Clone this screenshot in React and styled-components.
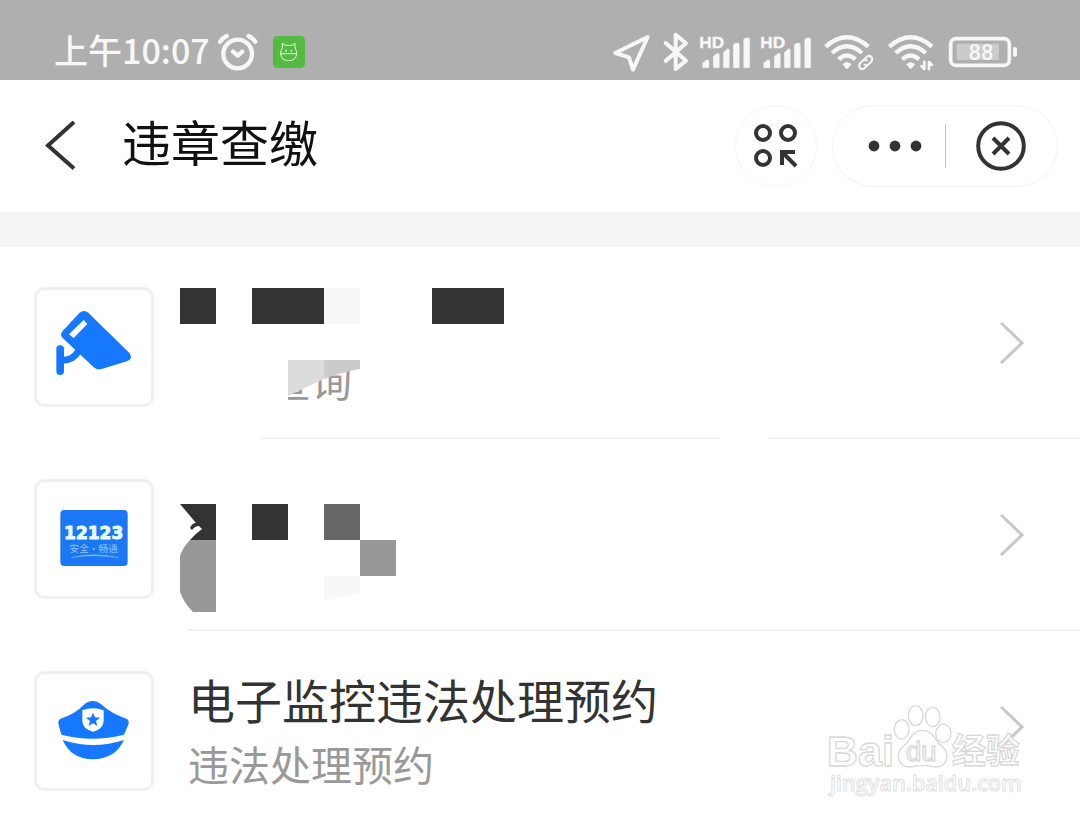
import React from 'react';
import styled, { createGlobalStyle } from 'styled-components';

const services = [
  { id: 'query', subtitle: '查询', indent: true, icon: 'camera', label: '查询', broken: true },
  { id: '12123', icon: 'badge', label: '12123' },
  { id: 'booking', title: '电子监控违法处理预约', subtitle: '违法处理预约', icon: 'cap' },
];

const AlarmIcon = () => (
  <svg width="47" height="60" viewBox="531 0 141 180" fill="none" stroke="#f7f7f7" strokeWidth="13" strokeLinecap="round" strokeLinejoin="round">
    <circle cx="590" cy="102" r="43" />
    <path d="M576 95l14 12 14-12" />
    <path d="M537 65q8-11 20-17M643 65q-8-11-20-17" />
  </svg>
);

const PetIcon = () => (
  <svg width="32" height="60" viewBox="696 0 96 180" fill="none" stroke="#e6ffdc" strokeWidth="3" strokeLinejoin="round">
    <rect x="696" y="48" width="96" height="96" rx="14" fill="#53bb41" stroke="none" />
    <path d="M724 84v-14l9 6h20l9-6v14q6 8 5 17-2 21-24 21t-24-21q-1-9 5-17zM720 101h46" />
    <path d="M735 89v6M751 89v6" strokeWidth="4" />
  </svg>
);

const LocationIcon = () => (
  <svg width="42" height="60" viewBox="33 0 126 180" fill="none" stroke="#f7f7f7" strokeWidth="12" strokeLinejoin="round">
    <path d="M143 51L46 99l41 13 12 37z" />
  </svg>
);

const BluetoothIcon = () => (
  <svg width="30" height="60" viewBox="183 0 90 180" fill="none" stroke="#f7f7f7" strokeWidth="12" strokeLinecap="round" strokeLinejoin="round">
    <path d="M197 69l61 53-31 25V44l31 26-61 53" />
  </svg>
);

const SignalIcon = () => (
  <svg width="53" height="60" viewBox="297 0 159 180" fill="#f7f7f7">
    <text x="298" y="84" fontFamily="Lato, sans-serif" fontWeight="700" fontSize="48" stroke="#f7f7f7" strokeWidth="2">HD</text>
    <path d="M308 143v-15q8-2 10-8 9-1 9 3v20zM340 143v-34l13-9q5 0 5 5v38zM370 143V98l12-12q6 0 6 5v52zM400 143V74q5-6 13-5 5 0 5 5v69zM431 143V58q3-5 13-5 5 0 5 5v85z" stroke="#f7f7f7" strokeWidth="1" />
  </svg>
);

const WifiArcs = ({ x }) => (
  <g transform={`translate(${x} 0)`}>
    <path d="M-64 80Q0 24 64 80M-45 99Q0 59 45 99M-25 118Q0 95 25 118" strokeWidth="13" />
    <path d="M-12 133q12-10 24 0L2 145q-2 2-4 0z" fill="#f7f7f7" strokeWidth="3" />
  </g>
);

const WifiLinkIcon = () => (
  <svg width="55" height="60" viewBox="33 0 165 180" fill="none" stroke="#f7f7f7" strokeLinejoin="round">
    <WifiArcs x={111} />
    <path d="M164 116l7-6q8-5 13 1t0 14l-9 9q-8 5-13-2M170 139l-7 6q-8 5-13-1t0-14l9-9q8-5 13 2" strokeWidth="6" />
  </svg>
);

const WifiDataIcon = () => (
  <svg width="54" height="60" viewBox="222 0 162 180" fill="none" stroke="#f7f7f7" strokeLinejoin="round">
    <WifiArcs x={302} />
    <path d="M343 122v25l-11-11M357 151v-25l11 11" strokeWidth="8" />
  </svg>
);

const BatteryIcon = () => (
  <svg width="74" height="60" viewBox="408 0 222 180" fill="none">
    <rect x="440" y="71" width="127" height="49" fill="#cbcbcb" />
    <rect x="422" y="56" width="176" height="80" rx="16" stroke="#f7f7f7" strokeWidth="11" />
    <rect x="609" y="81" width="12" height="29" rx="5" fill="#f7f7f7" />
    <text x="513" y="120" textAnchor="middle" fontFamily="Roboto, sans-serif" fontWeight="500" fontSize="66" fill="#f7f7f7">88</text>
  </svg>
);

const BackIcon = () => (
  <svg width="36" height="50" viewBox="0 0 36 50" fill="none" stroke="#333" strokeWidth="4">
    <path d="M32 1L6 24.500l26 23" />
  </svg>
);

const AppsIcon = () => (
  <svg width="44" height="44" viewBox="0 0 44 44" fill="none" stroke="#333" strokeWidth="4">
    <circle cx="9" cy="9" r="7" />
    <circle cx="34" cy="9" r="7" />
    <circle cx="9" cy="34" r="7" />
    <path d="M28 41V28h13M29 29l13 13" />
  </svg>
);

const MoreIcon = () => (
  <svg width="54" height="12" viewBox="0 0 54 12" fill="#333">
    <circle cx="6" cy="6" r="5.400" />
    <circle cx="27" cy="6" r="5.400" />
    <circle cx="48" cy="6" r="5.400" />
  </svg>
);

const CloseIcon = () => (
  <svg width="50" height="50" viewBox="0 0 50 50" fill="none" stroke="#333" strokeWidth="4">
    <circle cx="25" cy="25" r="22.800" />
    <path d="M17 17l16 16M33 17L17 33" />
  </svg>
);

const ChevronIcon = () => (
  <svg width="26" height="42" viewBox="0 0 26 42" fill="none" stroke="#c8c8c8" strokeWidth="3">
    <path d="M2 1l21 20L2 41" />
  </svg>
);

const CameraIcon = () => (
  <svg viewBox="51 45 342 342" fill="#1677ff">
    <path d="M178 114q13-12 27-1l124 122q10 16-6 23l-78 24q-12 4-22-4L128 189q-10-10 0-21z" />
    <path d="M147 178l44-43 11 12-41 42z" fill="#fff" />
    <rect x="109" y="211" width="23" height="89" rx="11" />
    <path d="M126 255q34 2 50-28" fill="none" stroke="#1677ff" strokeWidth="20" />
  </svg>
);

const BadgeIcon = () => (
  <svg viewBox="51 36 342 342">
    <rect x="121" y="120" width="202" height="168" rx="12" fill="#1c77f5" />
    <text x="221" y="207" textAnchor="middle" fontFamily="DejaVu Sans, sans-serif" fontWeight="700" fontSize="51" fill="#e6fcff" stroke="#e6fcff" strokeWidth="3">12123</text>
    <text x="221" y="246" textAnchor="middle" fontFamily="Noto Sans CJK SC, sans-serif" fontSize="29" fill="#8cc4ff">安全·畅通</text>
    <path d="M154 263q66-18 142 0-74-12-142 0z" fill="#8cc4ff" stroke="#8cc4ff" />
  </svg>
);

const CapIcon = () => (
  <svg viewBox="51 42 342 342" fill="#1677ff">
    <path d="M218 123q15 0 29 13 27 25 72 40 9 4 7 15l-14 33q-94 24-188 0l-9-33q-1-11 7-15 44-14 68-40 13-13 28-13z" />
    <path d="M128 240q92 30 184 0-26 57-94 58-65-1-90-58z" />
    <path d="M187 151q32-13 64 0v32q-1 24-32 32-31-8-32-32z" fill="#fff" />
    <path d="M219 158l6 14 15 1-12 10 4 15-13-8-13 8 4-15-12-10 15-1z" />
  </svg>
);

const icons = { camera: CameraIcon, badge: BadgeIcon, cap: CapIcon };

const mosaics = {
  query: (
    <>
      <path d="M88 70h20v52H88z" fill="#fff" />
      <path d="M0 1h36v36H0zM72 1h72v36H72zM252 1h72v36h-72z" fill="#333" />
      <path d="M144 1h36v36h-36z" fill="#f6f6f6" />
      <path d="M108 73h36v19q-18 8-36 17z" fill="#dcdcdc" />
      <path d="M144 73h36v9q-18 3-36 10z" fill="#cbcbcb" />
    </>
  ),
  12123: (
    <>
      <path d="M0 25h36v36H10q5-6 12-11l-3-3q-4 0-7 4l-2-2q2-5 6-5zM72 25h36v36H72z" fill="#333" />
      <path d="M144 25h36v36h-36z" fill="#666" />
      <path d="M10 61h26v72H13Q4 124 0 113V77q3-9 10-16zM180 61h36v36h-36z" fill="#989898" />
      <path d="M144 97h36v17l-36 8z" fill="#f8f8f8" />
    </>
  ),
};

const Watermark = () => (
  <WatermarkSvg width="240" height="120" viewBox="0 0 720 360" aria-hidden="true">
    <g fill="#fff" fillOpacity="0.8" stroke="#d9d9d9" strokeWidth="4">
      <ellipse cx="275" cy="118" rx="22" ry="29" />
      <ellipse cx="317" cy="77" rx="22" ry="30" />
      <ellipse cx="368" cy="81" rx="22" ry="29" />
      <ellipse cx="400" cy="130" rx="23" ry="28" />
      <path d="M337 121q25 0 39 25 8 14 23 26 18 18 9 40-8 20-33 19-18-4-37-4t-37 4q-25 1-33-19-9-22 9-40 15-12 23-26 14-25 37-25z" />
      <text x="50" y="227" fontFamily="Liberation Sans, sans-serif" fontWeight="700" fontSize="130">Bai</text>
      <text x="288" y="213" fontFamily="Liberation Sans, sans-serif" fontSize="82">du</text>
      <text x="426" y="220" fontFamily="Noto Sans CJK SC, sans-serif" fontWeight="700" fontSize="101">经验</text>
    </g>
    <text x="60" y="303" fontFamily="Open Sans, sans-serif" fontWeight="600" fontSize="65" fill="#fff" stroke="#e0e0e0" strokeWidth="3">
      jingyan.baidu.com
    </text>
  </WatermarkSvg>
);

const ServiceItem = ({ service }) => {
  const { id, title, subtitle, indent, icon, label } = service;
  const Icon = icons[icon];

  return (
    <li>
      <Row href={`#${id}`} aria-label={label}>
        <IconBox>
          <Icon />
        </IconBox>
        <Copy>
          <Title>{title}</Title>
          <Subtitle $indent={indent}>{subtitle}</Subtitle>
          {mosaics[id] && (
            <Mosaic width="324" height="134" viewBox="0 0 324 134" aria-hidden="true">
              {mosaics[id]}
            </Mosaic>
          )}
        </Copy>
        <Arrow>
          <ChevronIcon />
        </Arrow>
      </Row>
    </li>
  );
};

const App = () => (
  <Page>
    <GlobalStyle />
    <StatusBar>
      <Time>上午10:07</Time>
      <AlarmIcon />
      <PetIcon />
      <StatusIcons>
        <LocationIcon />
        <BluetoothIcon />
        <SignalIcon />
        <SignalIcon />
        <WifiLinkIcon />
        <WifiDataIcon />
        <BatteryIcon />
      </StatusIcons>
    </StatusBar>

    <Header>
      <IconButton aria-label="返回">
        <BackIcon />
      </IconButton>
      <Heading>违章查缴</Heading>
      <RoundButton aria-label="小程序">
        <AppsIcon />
      </RoundButton>
      <Capsule>
        <MoreButton aria-label="更多">
          <MoreIcon />
        </MoreButton>
        <Separator />
        <CapsuleButton aria-label="关闭">
          <CloseIcon />
        </CapsuleButton>
      </Capsule>
    </Header>

    <List>
      {services.map((service, i) => (
        <React.Fragment key={service.id}>
          <ServiceItem service={service} />
          {i < services.length - 1 && <Divider role="presentation" $broken={service.broken} />}
        </React.Fragment>
      ))}
    </List>
    <Watermark />
  </Page>
);

const GlobalStyle = createGlobalStyle`
  * {
    box-sizing: border-box;
  }

  body {
    margin: 0;
    background: #fff;
    font-family: 'Noto Sans CJK SC', sans-serif;
  }

  svg {
    display: block;
    flex-shrink: 0;
  }
`;

const Page = styled.main`
  position: relative;
`;

const StatusBar = styled.div`
  display: flex;
  align-items: flex-end;
  gap: 8px;
  height: 80px;
  padding: 0 60px 0 54px;
  background: #afafaf;
`;

const Time = styled.span`
  color: #f7f7f7;
  font-size: 34px;
  font-weight: 500;
  line-height: 60px;
  white-space: nowrap;
`;

const StatusIcons = styled.div`
  display: flex;
  gap: 8px;
  margin-left: auto;
`;

const Header = styled.header`
  display: flex;
  align-items: center;
  height: 132px;
  padding: 0 22px 0 42px;
`;

const IconButton = styled.button`
  display: flex;
  align-items: center;
  justify-content: center;
  padding: 0;
  border: 0;
  background: none;
  cursor: pointer;
`;

const Heading = styled.h1`
  margin: 0 auto 0 44px;
  padding-bottom: 10px;
  color: #111;
  font-size: 49px;
  font-weight: 400;
  line-height: 60px;
  white-space: nowrap;
`;

const RoundButton = styled(IconButton)`
  width: 82px;
  height: 82px;
  border: 1px solid #f6f6f6;
  border-radius: 50%;
`;

const Capsule = styled.div`
  display: grid;
  grid-template-columns: 1fr 1px 1fr;
  align-items: center;
  width: 226px;
  height: 82px;
  margin-left: 15px;
  border: 1px solid #f3f3f3;
  border-radius: 41px;
`;

const CapsuleButton = styled(IconButton)`
  height: 80px;
`;

const MoreButton = styled(CapsuleButton)`
  padding-left: 12px;
`;

const Separator = styled.span`
  height: 44px;
  background: #c4c4c4;
`;

const List = styled.ul`
  margin: 0;
  padding: 0;
  border-top: 35px solid #f5f5f5;
  list-style: none;
`;

const Row = styled.a`
  display: flex;
  padding: 40px 55px 30px 34px;
  text-decoration: none;
`;

const IconBox = styled.div`
  flex: none;
  width: 120px;
  height: 120px;
  border: 3px solid #f0f0f0;
  border-radius: 10px;
`;

const Copy = styled.div`
  position: relative;
  flex: 1;
  display: flex;
  flex-direction: column;
  gap: 10px;
  margin-left: 34px;
`;

const Title = styled.span`
  min-height: 56px;
  color: #333;
  font-size: 47px;
  line-height: 56px;
`;

const Subtitle = styled.span`
  padding-left: ${({ $indent }) => ($indent ? '2em' : 0)};
  color: #999;
  font-size: 41px;
  line-height: 52px;
`;

const Mosaic = styled.svg`
  position: absolute;
  top: 0;
  left: -8px;
`;

const Arrow = styled.span`
  padding-top: 35px;
`;

const Divider = styled.li`
  height: 2px;
  margin-left: ${({ $broken }) => ($broken ? '262px' : '188px')};
  background: ${({ $broken }) =>
    $broken ? 'linear-gradient(to right, #f2f2f2 457px, #fff 457px 507px, #f2f2f2 507px)' : '#f2f2f2'};
`;

const WatermarkSvg = styled.svg`
  position: absolute;
  right: 30px;
  bottom: 11px;
  pointer-events: none;
`;

export default App;
